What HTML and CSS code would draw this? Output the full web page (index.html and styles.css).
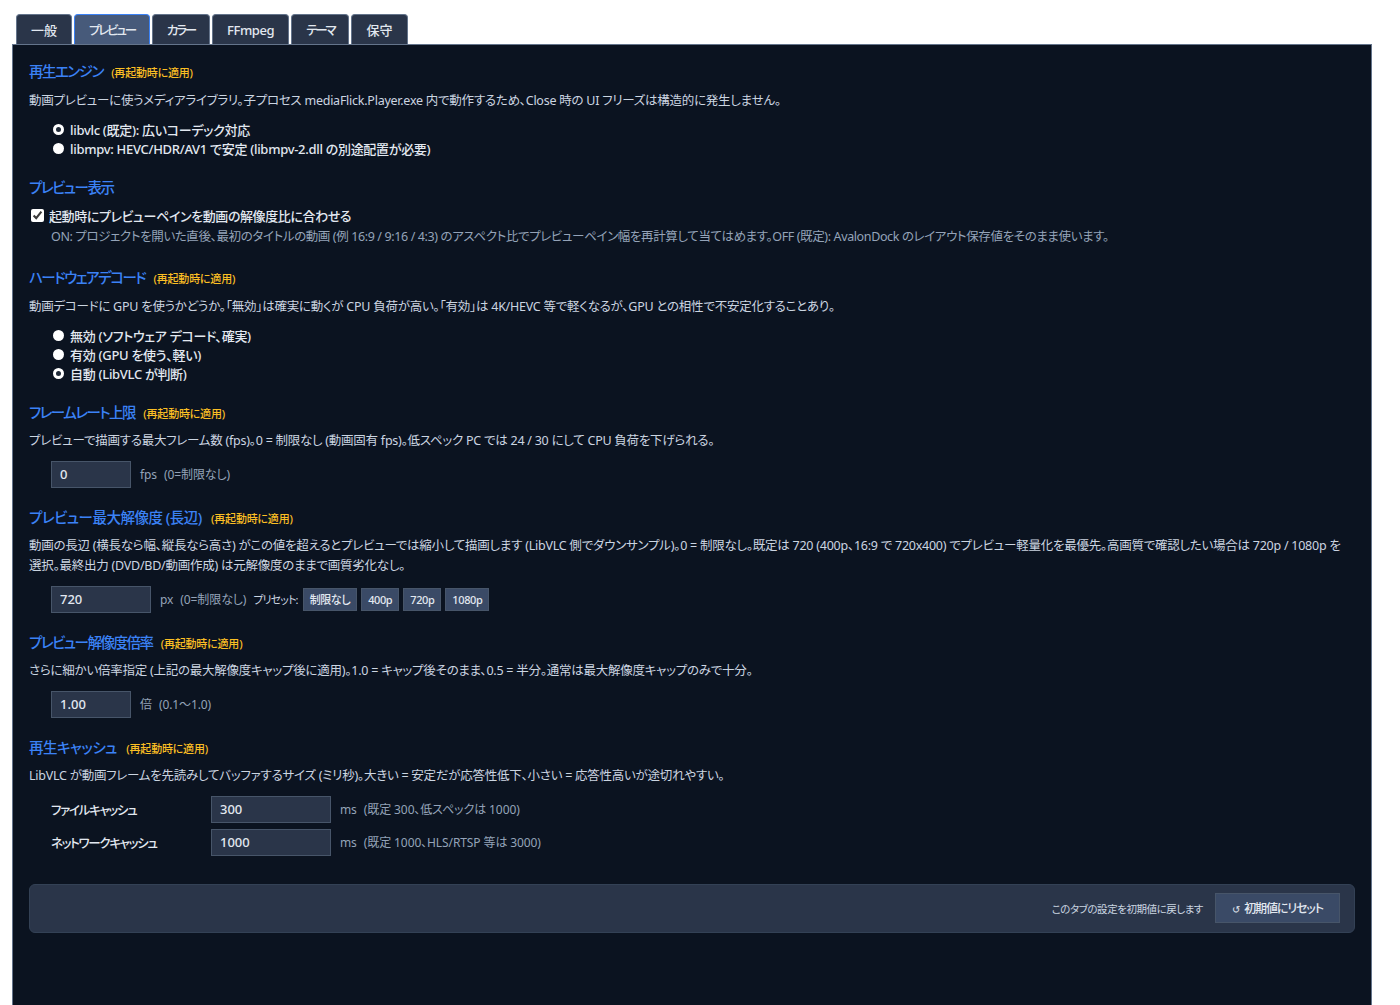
FILE: index.html
```html
<!DOCTYPE html>
<html lang="ja">
  <head>
    <meta charset="utf-8">
    <link rel="stylesheet" href="styles.css">
    <title>設定</title>
  </head>
  <body>
    <div class="tabs">
      <div class="tab">一般</div>
      <div class="tab active kana">プレビュー</div>
      <div class="tab kana">カラー</div>
      <div class="tab ffmpeg">FFmpeg</div>
      <div class="tab kana">テーマ</div>
      <div class="tab">保守</div>
    </div>
    <div class="panel">
      <h3 class="heading kana">再生エンジン <span class="note">(再起動時に適用)</span></h3>
      <p class="desc first">動画プレビューに使うメディアライブラリ。子プロセス mediaFlick.Player.exe 内で動作するため、Close 時の UI フリーズは構造的に発生しません。</p>
      <div class="radios">
        <label class="radio"><input type="radio" name="engine" checked>libvlc (既定): 広いコーデック対応</label>
        <label class="radio"><input type="radio" name="engine">libmpv: HEVC/HDR/AV1 で安定 (libmpv-2.dll の別途配置が必要)</label>
      </div>

      <h3 class="heading kana">プレビュー表示</h3>
      <label class="check"><input type="checkbox" checked>起動時にプレビューペインを動画の解像度比に合わせる</label>
      <p class="hint">ON: プロジェクトを開いた直後、最初のタイトルの動画 (例 16:9 / 9:16 / 4:3) のアスペクト比でプレビューペイン幅を再計算して当てはめます。OFF (既定): AvalonDock のレイアウト保存値をそのまま使います。</p>

      <h3 class="heading kana">ハードウェアデコード <span class="note">(再起動時に適用)</span></h3>
      <p class="desc first">動画デコードに GPU を使うかどうか。「無効」は確実に動くが CPU 負荷が高い。「有効」は 4K/HEVC 等で軽くなるが、GPU との相性で不安定化することあり。</p>
      <div class="radios">
        <label class="radio"><input type="radio" name="hw">無効 (ソフトウェア デコード、確実)</label>
        <label class="radio"><input type="radio" name="hw">有効 (GPU を使う、軽い)</label>
        <label class="radio"><input type="radio" name="hw" checked>自動 (LibVLC が判断)</label>
      </div>

      <h3 class="heading kana">フレームレート上限 <span class="note">(再起動時に適用)</span></h3>
      <p class="desc">プレビューで描画する最大フレーム数 (fps)。0 = 制限なし (動画固有 fps)。低スペック PC では 24 / 30 にして CPU 負荷を下げられる。</p>
      <div class="row">
        <input class="num w80" type="text" value="0">
        <span class="unit">fps</span>
        <span class="unit">(0=制限なし)</span>
      </div>

      <h3 class="heading">プレビュー最大解像度 (長辺) <span class="note">(再起動時に適用)</span></h3>
      <p class="desc">動画の長辺 (横長なら幅、縦長なら高さ) がこの値を超えるとプレビューでは縮小して描画します (LibVLC 側でダウンサンプル)。0 = 制限なし。既定は 720 (400p、16:9 で 720x400) でプレビュー軽量化を最優先。高画質で確認したい場合は 720p / 1080p を<br>選択。最終出力 (DVD/BD/動画作成) は元解像度のままで画質劣化なし。</p>
      <div class="row">
        <input class="num w100" type="text" value="720">
        <span class="unit">px</span>
        <span class="unit">(0=制限なし)</span>
        <span class="unit preset-label">プリセット:</span>
        <div class="presets">
          <button class="preset">制限なし</button>
          <button class="preset">400p</button>
          <button class="preset">720p</button>
          <button class="preset">1080p</button>
        </div>
      </div>

      <h3 class="heading kana">プレビュー解像度倍率 <span class="note">(再起動時に適用)</span></h3>
      <p class="desc">さらに細かい倍率指定 (上記の最大解像度キャップ後に適用)。1.0 = キャップ後そのまま、0.5 = 半分。通常は最大解像度キャップのみで十分。</p>
      <div class="row">
        <input class="num w80" type="text" value="1.00">
        <span class="unit">倍</span>
        <span class="unit">(0.1〜1.0)</span>
      </div>

      <h3 class="heading">再生キャッシュ <span class="note">(再起動時に適用)</span></h3>
      <p class="desc">LibVLC が動画フレームを先読みしてバッファするサイズ (ミリ秒)。大きい = 安定だが応答性低下、小さい = 応答性高いが途切れやすい。</p>
      <div class="cache">
        <div class="cache-row">
          <span class="field-label">ファイルキャッシュ</span>
          <input class="num w120" type="text" value="300">
          <span class="unit">ms</span>
          <span class="unit">(既定 300、低スペックは 1000)</span>
        </div>
        <div class="cache-row">
          <span class="field-label">ネットワークキャッシュ</span>
          <input class="num w120" type="text" value="1000">
          <span class="unit">ms</span>
          <span class="unit">(既定 1000、HLS/RTSP 等は 3000)</span>
        </div>
      </div>

      <div class="reset-bar">
        <span class="reset-text">このタブの設定を初期値に戻します</span>
        <button class="reset-btn"><span class="reset-icon">↺</span>初期値にリセット</button>
      </div>
    </div>
  </body>
</html>
```

FILE: styles.css
```css
* {
  box-sizing: border-box;
}
html,
body {
  height: 100%;
}
body {
  margin: 0;
  padding: 14px 12px 0 12px;
  background: #fff;
  color: #e2e8f0;
  font-family: "Noto Sans", "Noto Sans CJK JP", sans-serif;
  font-size: 13px;
  font-feature-settings: "palt";
  overflow: hidden;
  display: flex;
  flex-direction: column;
}
input,
button {
  font-feature-settings: "palt";
}
.tabs {
  display: flex;
  gap: 2px;
  padding-left: 4px;
  height: 30px;
}
.tab {
  display: flex;
  align-items: center;
  padding: 0 14px;
  background: #2a3549;
  border: 1px solid #64748b;
  border-bottom: none;
  border-radius: 4px 4px 0 0;
  color: #e2e8f0;
  font-size: 13px;
  font-weight: 500;
}
.tab.active {
  background: #475a7a;
  border-color: #3b82f6;
}
.tab.kana {
  font-size: 12.5px;
  letter-spacing: -2.2px;
}
.tab.ffmpeg {
  letter-spacing: -0.4px;
}
.panel {
  flex: 1;
  width: 1360px;
  padding: 15px 16px 0 16px;
  background: #0b1320;
  border: 1px solid #64748b;
  border-bottom: none;
}
.heading {
  margin: 0;
  height: 22px;
  color: #3b82f6;
  font-size: 14.5px;
  font-weight: 500;
  letter-spacing: -0.5px;
  line-height: 22px;
}
.heading.kana {
  letter-spacing: -1.5px;
}
.note {
  margin-left: 6px;
  color: #fbbf24;
  font-size: 11px;
  font-weight: 500;
  letter-spacing: -0.2px;
}
.desc {
  margin: 7.5px 0 0 0;
  color: #cbd5e1;
  font-size: 12.5px;
  letter-spacing: -0.25px;
  line-height: 20px;
}
.desc.first {
  margin-top: 9px;
}
.hint {
  margin: 2px 0 0 22px;
  color: #94a3b8;
  font-size: 12.5px;
  letter-spacing: -0.38px;
  line-height: 20px;
}
.radios {
  display: flex;
  flex-direction: column;
  margin: 9px 0 18px 22px;
}
.radio {
  display: flex;
  align-items: center;
  height: 19px;
  color: #e2e8f0;
  font-size: 13px;
  font-weight: 500;
  letter-spacing: -0.3px;
}
.radio input {
  appearance: none;
  width: 11px;
  height: 11px;
  margin: 0 6px 0 2px;
  border-radius: 50%;
  background: #fff;
}
.radio input:checked {
  border: 3px solid #fff;
  background: #1f2937;
}
.check {
  display: flex;
  align-items: center;
  height: 20px;
  margin-top: 7px;
  color: #e2e8f0;
  font-size: 13px;
  font-weight: 500;
  letter-spacing: -0.4px;
}
.check input {
  width: 13px;
  height: 13px;
  margin: 0 5px 0 2px;
  accent-color: #fff;
}
.hint + .heading {
  margin-top: 19px;
}
.row {
  display: flex;
  align-items: center;
  gap: 7px;
  margin: 10px 0 18.5px 22px;
}
.num {
  height: 27px;
  padding: 0 8px;
  background: #2a3549;
  border: 1px solid #475569;
  color: #e2e8f0;
  font-family: inherit;
  font-size: 13px;
  font-weight: 500;
  margin-right: 2px;
}
.w80 {
  width: 80px;
}
.w100 {
  width: 100px;
}
.w120 {
  width: 120px;
}
.unit {
  color: #94a3b8;
  font-size: 12px;
  letter-spacing: -0.1px;
}
.preset-label {
  color: #cbd5e1;
  font-size: 11px;
  letter-spacing: -0.9px;
  margin-right: -2px;
}
.presets {
  display: flex;
  gap: 4px;
}
.preset {
  height: 23px;
  padding: 0 6px;
  background: #3a4a66;
  border: 1px solid #475569;
  color: #e2e8f0;
  font-family: inherit;
  font-size: 11px;
  font-weight: 500;
  letter-spacing: -0.4px;
}
.cache {
  display: flex;
  flex-direction: column;
  gap: 6px;
  margin: 10px 0 0 22px;
}
.cache-row {
  display: flex;
  align-items: center;
  gap: 7px;
}
.field-label {
  width: 153px;
  color: #e2e8f0;
  font-size: 12.5px;
  font-weight: 500;
  letter-spacing: -1.3px;
}
.reset-bar {
  display: flex;
  justify-content: flex-end;
  align-items: center;
  gap: 12px;
  height: 49px;
  margin-top: 28px;
  padding: 0 14px;
  background: #2a3549;
  border: 1px solid #334155;
  border-radius: 6px;
}
.reset-text {
  color: #cbd5e1;
  font-size: 10.5px;
  letter-spacing: -0.45px;
}
.reset-btn {
  width: 125px;
  height: 30px;
  padding: 0;
  background: #3a4a66;
  border: 1px solid #475569;
  color: #e2e8f0;
  font-family: inherit;
  font-size: 12px;
  font-weight: 500;
  letter-spacing: -1.1px;
}
.reset-icon {
  margin-right: 4px;
  font-size: 10px;
  letter-spacing: 0;
}
```
